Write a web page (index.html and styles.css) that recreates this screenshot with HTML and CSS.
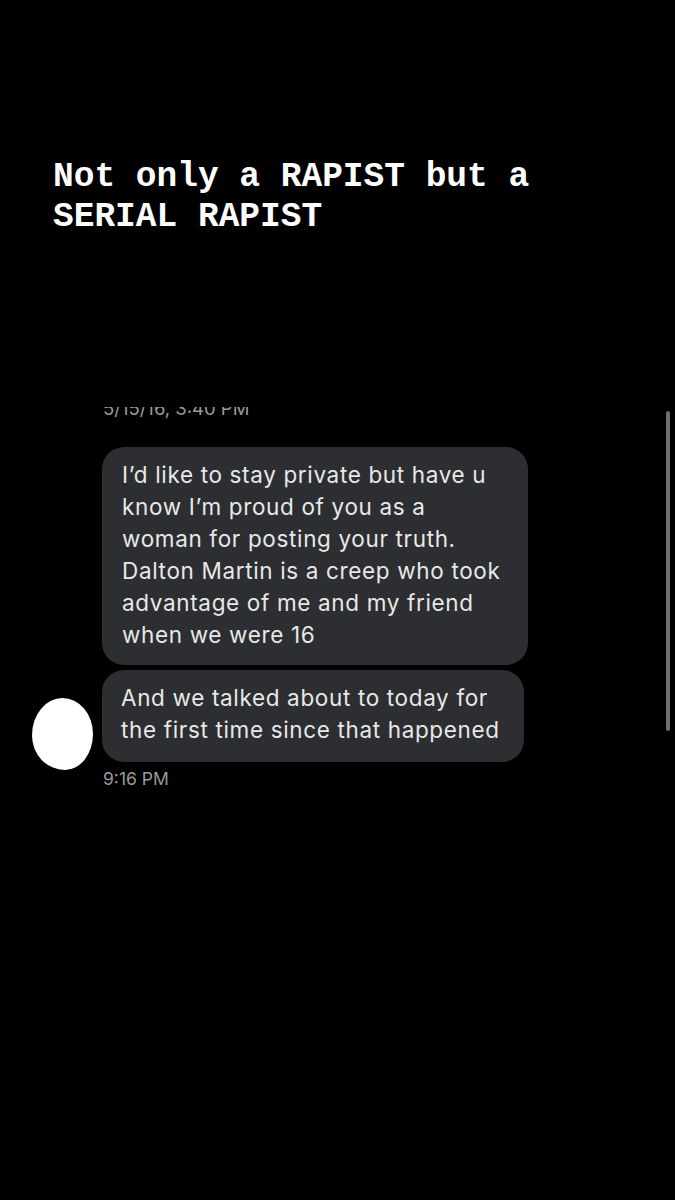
FILE: index.html
```html
<!DOCTYPE html>
<html>
<head>
<meta charset="utf-8">
<link rel="stylesheet" href="styles.css">
</head>
<body>
<div class="story">
  <div class="caption">
    <span class="cap-line">Not only a RAPIST but a</span>
    <span class="cap-line">SERIAL RAPIST</span>
  </div>
  <div class="chat">
    <div class="stamp-clip"><div class="stamp">5/15/16, 3:40 PM</div></div>
    <div class="thread">
      <div class="avatar-col"><div class="avatar"></div></div>
      <div class="bubbles">
        <div class="bubble b1">I’d like to stay private but have u<br>know I’m proud of you as a<br>woman for posting your truth.<br>Dalton Martin is a creep who took<br>advantage of me and my friend<br>when we were 16</div>
        <div class="bubble b2">And we talked about to today for<br>the first time since that happened</div>
        <div class="time">9:16 PM</div>
      </div>
    </div>
  </div>
  <div class="scrollbar"></div>
</div>
</body>
</html>
```
FILE: styles.css
```css
html, body {
  margin: 0;
  padding: 0;
  background: #000;
}
.story {
  position: relative;
  width: 675px;
  height: 1200px;
  background: #000;
  overflow: hidden;
}
.caption {
  padding: 157px 0 0 53px;
  display: flex;
  flex-direction: column;
  font-family: "Liberation Mono", "Courier New", monospace;
  font-weight: bold;
  font-size: 34.5px;
  line-height: 40px;
  color: #fff;
}
.chat {
  padding: 170px 0 0 0;
}
.stamp-clip {
  height: 14px;
  overflow: hidden;
  margin-left: 103px;
}
.stamp {
  font-family: Inter, "Liberation Sans", sans-serif;
  font-size: 18.5px;
  line-height: 20px;
  color: #9a9a9a;
  margin-top: -9px;
}
.thread {
  display: flex;
  margin-top: 26px;
}
.avatar-col {
  width: 102px;
  flex: none;
  position: relative;
}
.avatar {
  position: absolute;
  left: 32px;
  top: 251px;
  width: 61px;
  height: 72px;
  background: #fff;
  border-radius: 50% 50% 46% 54% / 52% 50% 50% 48%;
}
.bubbles {
  display: flex;
  flex-direction: column;
  align-items: flex-start;
  gap: 5px;
}
.bubble {
  background: #2c2e31;
  color: #e8e8e8;
  font-family: Inter, "Liberation Sans", sans-serif;
  font-size: 22.5px;
  letter-spacing: 0.65px;
  line-height: 32px;
  border-radius: 22px;
  padding: 12px 0 14px 20px;
  box-sizing: border-box;
  white-space: nowrap;
}
.b1 {
  width: 426px;
}
.b2 {
  width: 422px;
  padding: 12px 0 16px 19px;
}
.time {
  font-family: Inter, "Liberation Sans", sans-serif;
  font-size: 17.5px;
  line-height: 24px;
  color: #9a9a9a;
  margin-left: 1px;
}
.scrollbar {
  position: absolute;
  left: 666px;
  top: 411px;
  width: 4px;
  height: 320px;
  border-radius: 2px;
  background: #6e6e6e;
}
```
